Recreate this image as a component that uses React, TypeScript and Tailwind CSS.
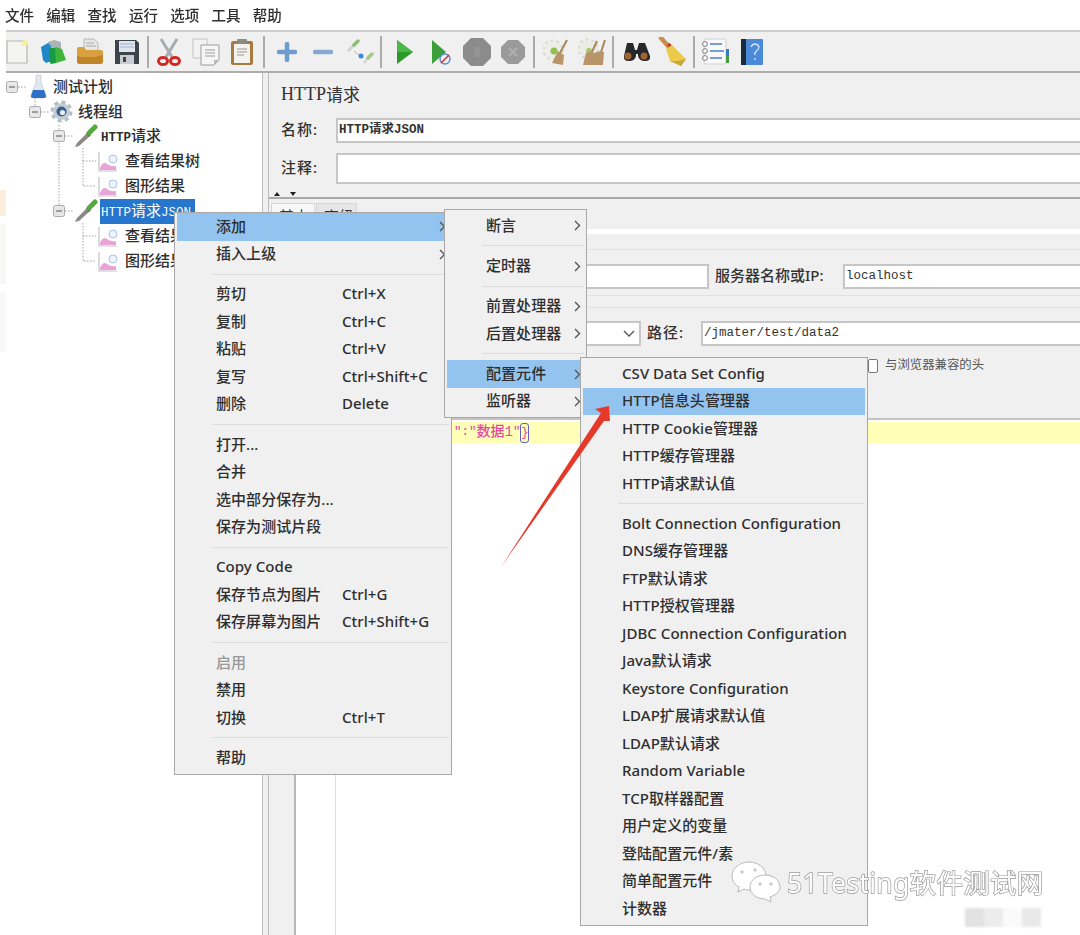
import React from "react";

type MenuRow = {
  label?: string;
  shortcut?: string;
  sub?: boolean;
  active?: boolean;
  muted?: boolean;
};

const mainMenu: MenuRow[] = [
  { label: "添加", sub: true, active: true },
  { label: "插入上级", sub: true },
  {},
  { label: "剪切", shortcut: "Ctrl+X" },
  { label: "复制", shortcut: "Ctrl+C" },
  { label: "粘贴", shortcut: "Ctrl+V" },
  { label: "复写", shortcut: "Ctrl+Shift+C" },
  { label: "删除", shortcut: "Delete" },
  {},
  { label: "打开..." },
  { label: "合并" },
  { label: "选中部分保存为..." },
  { label: "保存为测试片段" },
  {},
  { label: "Copy Code" },
  { label: "保存节点为图片", shortcut: "Ctrl+G" },
  { label: "保存屏幕为图片", shortcut: "Ctrl+Shift+G" },
  {},
  { label: "启用", muted: true },
  { label: "禁用" },
  { label: "切换", shortcut: "Ctrl+T" },
  {},
  { label: "帮助" },
];

const addMenu: MenuRow[] = [
  { label: "断言", sub: true },
  {},
  { label: "定时器", sub: true },
  {},
  { label: "前置处理器", sub: true },
  { label: "后置处理器", sub: true },
  {},
  { label: "配置元件", sub: true, active: true },
  { label: "监听器", sub: true },
];

const configMenu: MenuRow[] = [
  { label: "CSV Data Set Config" },
  { label: "HTTP信息头管理器", active: true },
  { label: "HTTP Cookie管理器" },
  { label: "HTTP缓存管理器" },
  { label: "HTTP请求默认值" },
  {},
  { label: "Bolt Connection Configuration" },
  { label: "DNS缓存管理器" },
  { label: "FTP默认请求" },
  { label: "HTTP授权管理器" },
  { label: "JDBC Connection Configuration" },
  { label: "Java默认请求" },
  { label: "Keystore Configuration" },
  { label: "LDAP扩展请求默认值" },
  { label: "LDAP默认请求" },
  { label: "Random Variable" },
  { label: "TCP取样器配置" },
  { label: "用户定义的变量" },
  { label: "登陆配置元件/素" },
  { label: "简单配置元件" },
  { label: "计数器" },
];

function Chevron() {
  return (
    <svg width="7" height="11" viewBox="0 0 7 11" className="shrink-0 mt-[2px]">
      <path d="M1 1l4.5 4.5L1 10" fill="none" stroke="#555" strokeWidth="1.4" />
    </svg>
  );
}

function Menu({ rows, className }: { rows: MenuRow[]; className: string }) {
  return (
    <div className={`absolute bg-[#f0f0f0] border border-[#a8a8a8] p-[2px] ${className}`}>
      {rows.map((row, i) =>
        row.label ? (
          <div
            key={i}
            className={`h-[27.5px] flex items-center pl-[39px] pr-[3px] pb-[2px] text-[15px] font-medium tracking-[0.05px] ${
              row.active ? "bg-[#93c4f0]" : ""
            } ${row.muted ? "text-[#999]" : "text-[#2e2e2e]"}`}
          >
            <span className="whitespace-nowrap">{row.label}</span>
            {row.shortcut && (
              <span className="absolute left-[167px] whitespace-nowrap">{row.shortcut}</span>
            )}
            {row.sub && (
              <span className="ml-auto">
                <Chevron />
              </span>
            )}
          </div>
        ) : (
          <div key={i} className="h-[12.75px] flex items-center pl-[35px]">
            <div className="h-[1px] w-full bg-[#dcdcdc]" />
          </div>
        )
      )}
    </div>
  );
}

/* toolbar drawings */
const NewDoc = () => (
  <svg width="24" height="26" viewBox="0 0 24 26">
    <path d="M2 2h17l3 3v19H2z" fill="#f4f4f2" stroke="#b4b4b0" strokeWidth="1.2" />
    <circle cx="20" cy="4" r="3" fill="#f6ee9c" />
  </svg>
);
const Templates = () => (
  <svg width="28" height="26" viewBox="0 0 28 26">
    <path d="M8 3l6-2 7 2v10l-13 2z" fill="#a9b4b6" />
    <path d="M1 8l7-4 3 3v15l-5 2-3-3z" fill="#1f88c8" />
    <path d="M9 9l7 0v15l-5 1-2-3z" fill="#169c46" />
    <path d="M15 8l7 2 4 11-10 3z" fill="#3fb53a" />
  </svg>
);
const OpenFolder = () => (
  <svg width="28" height="27" viewBox="0 0 28 27">
    <path d="M8 1h10l4 4v9H8z" fill="#e6e6e6" stroke="#aaa" strokeWidth=".8" />
    <path d="M10 5h8M10 8h10" stroke="#aaa" />
    <path d="M1 11q0-2 2-2h5l2 3h15q2 0 2 2v9q0 3-3 3H4q-3 0-3-3z" fill="#d9a040" />
    <path d="M1 18q12 3 26-1v6q0 3-3 3H4q-3 0-3-3z" fill="#c08428" />
  </svg>
);
const Floppy = () => (
  <svg width="26" height="26" viewBox="0 0 26 26">
    <path d="M1 1h21l3 3v21H1z" fill="#3e444c" />
    <rect x="5" y="2" width="16" height="11" fill="#dfe6ee" />
    <path d="M6 5h14M6 8h14" stroke="#9fb4cc" />
    <rect x="6" y="16" width="14" height="9" fill="#c8ccd0" />
    <rect x="9" y="18" width="3" height="5" fill="#444" />
  </svg>
);
const Scissors = () => (
  <svg width="24" height="28" viewBox="0 0 24 28">
    <path d="M4 1l11 18M20 1L9 19" stroke="#a8acb0" strokeWidth="3" fill="none" />
    <ellipse cx="6" cy="23" rx="4.5" ry="3.5" fill="none" stroke="#cf2a24" strokeWidth="3" />
    <ellipse cx="18" cy="23" rx="4.5" ry="3.5" fill="none" stroke="#cf2a24" strokeWidth="3" />
  </svg>
);
const CopyDocs = () => (
  <svg width="28" height="28" viewBox="0 0 28 28">
    <path d="M1 1h14v19H1z" fill="#f2f2f2" stroke="#c4c4c4" />
    <path d="M9 7h18v15l-5 5H9z" fill="#f6f6f6" stroke="#9c9c9c" />
    <path d="M13 12h10M13 15h10M13 18h10" stroke="#999" />
    <path d="M27 22h-5v5z" fill="#bbb" />
  </svg>
);
const Paste = () => (
  <svg width="24" height="28" viewBox="0 0 24 28">
    <rect x="1" y="3" width="22" height="24" rx="2" fill="#a87a40" />
    <rect x="4" y="6" width="16" height="19" fill="#f4f2ec" />
    <rect x="7" y="1" width="10" height="5" rx="1" fill="#8a8a80" />
    <path d="M7 11h10M7 14h10M7 17h7" stroke="#999" />
  </svg>
);
const Plus = () => (
  <svg width="20" height="20" viewBox="0 0 20 20">
    <path d="M10 2v16M2 10h16" stroke="#6f9ccf" strokeWidth="4.5" strokeLinecap="round" />
  </svg>
);
const Minus = () => (
  <svg width="20" height="8" viewBox="0 0 20 8">
    <path d="M2 4h16" stroke="#86a9d3" strokeWidth="4.5" strokeLinecap="round" />
  </svg>
);
const Toggle = () => (
  <svg width="28" height="26" viewBox="0 0 28 26">
    <path d="M2 12l6-6" stroke="#d4d4d4" strokeWidth="3" />
    <path d="M8 6l4-4" stroke="#8cc070" strokeWidth="3.5" strokeLinecap="round" />
    <path d="M18 24l4-5" stroke="#d8d8d8" strokeWidth="3" />
    <path d="M22 19l4-4" stroke="#a0cc80" strokeWidth="3.5" strokeLinecap="round" />
    <path d="M8 12l6 5" stroke="#bbb" />
    <circle cx="15" cy="17" r="2.5" fill="#3c88e0" />
  </svg>
);
const Play = () => (
  <svg width="18" height="26" viewBox="0 0 18 26">
    <path d="M1 1l16 12L1 25z" fill="#2c9a2a" />
    <path d="M1 1l16 12H1z" fill="#4cb848" />
  </svg>
);
const PlayNoPause = () => (
  <svg width="20" height="26" viewBox="0 0 20 26">
    <path d="M1 1l14 12L1 25z" fill="#3ca03a" />
    <circle cx="14" cy="20" r="5" fill="#eef4fc" stroke="#5a8ad0" strokeWidth="1.4" />
    <path d="M10 24l8-8" stroke="#d83030" strokeWidth="1.6" />
  </svg>
);
const Stop = () => (
  <svg width="28" height="28" viewBox="0 0 28 28">
    <path d="M8 0h12l8 8v12l-8 8H8l-8-8V8z" fill="#8c8c8c" />
    <path d="M11 9h6v10h-6z" fill="#949494" />
  </svg>
);
const Shutdown = () => (
  <svg width="24" height="24" viewBox="0 0 24 24">
    <path d="M7 0h10l7 7v10l-7 7H7l-7-7V7z" fill="#9a9a9a" />
    <path d="M8 8l8 8M16 8l-8 8" stroke="#b0b0b0" strokeWidth="2" />
  </svg>
);
const ClearOne = () => (
  <svg width="26" height="28" viewBox="0 0 26 28">
    <circle cx="10" cy="12" r="8" fill="#eceee8" />
    <circle cx="10" cy="12" r="9.5" fill="none" stroke="#dcdcd4" strokeWidth="2.5" strokeDasharray="3 3" />
    <circle cx="11" cy="13" r="3.5" fill="#90c050" />
    <path d="M24 2l-7 13" stroke="#a88858" strokeWidth="2" />
    <path d="M15 13l6 4 -1 10 -11-2z" fill="#b89468" />
  </svg>
);
const ClearAll = () => (
  <svg width="28" height="28" viewBox="0 0 28 28">
    <circle cx="10" cy="11" r="8" fill="#ecece6" />
    <circle cx="10" cy="11" r="9.5" fill="none" stroke="#dcdcd4" strokeWidth="2.5" strokeDasharray="3 3" />
    <circle cx="11" cy="13" r="3" fill="#a8c868" />
    <path d="M19 3l-5 11M27 2l-4 12" stroke="#a88858" strokeWidth="2" />
    <path d="M8 15l6-2 2 2 6-2 4 1-1 13H5z" fill="#b89468" />
  </svg>
);
const Binoculars = () => (
  <svg width="30" height="20" viewBox="0 0 30 20">
    <path d="M6 1h6l2 7h2l2-7h6l5 13q1 5-5 5t-7-5v-2h-2v2q-1 5-7 5t-5-5z" fill="#26282c" />
    <circle cx="7" cy="14" r="3.5" fill="#a0642c" />
    <circle cx="23" cy="14" r="3.5" fill="#a0642c" />
  </svg>
);
const Broom = () => (
  <svg width="30" height="30" viewBox="0 0 30 30">
    <path d="M3 1l8 9" stroke="#c8904c" strokeWidth="4.5" strokeLinecap="round" />
    <path d="M10 7l5 5" stroke="#cc3a26" strokeWidth="3.5" />
    <path d="M8 12l6-4 14 14-5 7-11-5z" fill="#ecca4c" />
    <path d="M12 24l11 5 5-7-8 2z" fill="#c8a838" />
  </svg>
);
const ListIcon = () => (
  <svg width="28" height="28" viewBox="0 0 28 28">
    <rect x="3" y="1" width="22" height="25" rx="2" fill="#f8f8f8" stroke="#d0d0d0" />
    <path d="M9 6h12M9 13h14M9 20h12" stroke="#4a80c8" strokeWidth="1.6" />
    <circle cx="4" cy="6" r="2.4" fill="#fff" stroke="#777" />
    <circle cx="4" cy="13" r="2.4" fill="#fff" stroke="#777" />
    <circle cx="4" cy="20" r="2.4" fill="#fff" stroke="#777" />
    <rect x="25" y="11" width="3" height="7" fill="#3c78c0" />
    <rect x="25" y="18" width="3" height="7" fill="#4a9a40" />
  </svg>
);
const HelpBook = () => (
  <svg width="22" height="26" viewBox="0 0 22 26">
    <rect x="0" y="0" width="22" height="26" rx="1" fill="#4a8ad8" />
    <rect x="0" y="0" width="5" height="26" fill="#1c2c40" />
    <path d="M10 8q1-3 4-3t4 3q0 2-2.5 4t-1.5 4M14 19v2" fill="none" stroke="#cfe2f8" strokeWidth="1.3" />
  </svg>
);

const Sep = ({ className = "mr-[2px]" }: { className?: string }) => (
  <div className={`w-[2px] h-[32px] ml-[2px] bg-[#ababab] ${className}`} />
);

function Tool({ children, className = "w-[36.5px]" }: { children: React.ReactNode; className?: string }) {
  return <div className={`flex justify-center items-center ${className}`}>{children}</div>;
}

/* tree drawings */
const Flask = () => (
  <svg width="17" height="25" viewBox="0 0 17 25">
    <path d="M6 1h5v8l5 12q1 3-2 3H3q-3 0-2-3l5-12z" fill="#e4e8ec" stroke="#b8c0c8" strokeWidth=".6" />
    <path d="M3 16h11l2 6q0 2-2 2H3q-2 0-2-2z" fill="#2c70c8" />
  </svg>
);
const Gear = () => (
  <svg width="23" height="23" viewBox="0 0 23 23">
    <circle cx="11.5" cy="11.5" r="8.5" fill="#c4ccd6" />
    <circle cx="11.5" cy="11.5" r="9.5" fill="none" stroke="#b4bcc6" strokeWidth="3" strokeDasharray="4 3.4" />
    <circle cx="11.5" cy="11.5" r="5" fill="#3a6090" />
    <circle cx="12.5" cy="12.5" r="2.6" fill="#e8ecf0" />
  </svg>
);
const Dropper = () => (
  <svg width="25" height="25" viewBox="0 0 25 25">
    <path d="M2 23l2-4L14 9l3 3L6 22z" fill="#8a8a82" />
    <path d="M14 9l3 3" stroke="#555" strokeWidth="2" />
    <path d="M16 9l6-6" stroke="#58a840" strokeWidth="5" strokeLinecap="round" />
  </svg>
);
const Chart = () => (
  <svg width="20" height="21" viewBox="0 0 20 21">
    <path d="M1 1v19h18" fill="none" stroke="#c4c4c4" strokeWidth="1.2" />
    <path d="M2 19v-2q3-7 7-4t9 2v4z" fill="#e8a4d8" />
    <circle cx="15" cy="8" r="4" fill="#eef4fb" stroke="#a8c4ec" />
  </svg>
);

function TreeLines() {
  const boxes = [
    [12, 87],
    [35, 112],
    [59, 136],
    [59, 211],
  ];
  return (
    <svg className="absolute left-0 top-0" width="256" height="200" viewBox="6 73 256 200">
      <g fill="none" stroke="#a0a0a0" strokeDasharray="1.5 1.5">
        <path d="M18 87h9M41 112h8M65 136h8M65 211h8" />
        <path d="M35 98v8M59 125v80" />
        <path d="M83 148v38h13M83 161h13M83 223v38h13M83 236h13" />
      </g>
      {boxes.map(([x, y]) => (
        <g key={`${x}-${y}`}>
          <rect x={x - 5.5} y={y - 5.5} width="11" height="11" rx="2" fill="#e8e8e8" stroke="#aaa" />
          <path d={`M${x - 3} ${y}h6`} stroke="#555" />
        </g>
      ))}
    </svg>
  );
}

function Field({ children, className }: { children?: React.ReactNode; className: string }) {
  return (
    <div
      className={`h-[25px] bg-white border-2 border-r-0 border-[#c6c6c6] flex items-center pl-[1px] text-[#333] font-['Liberation_Mono','Noto_Sans_CJK_SC',monospace] text-[12.5px] whitespace-nowrap ${className}`}
    >
      {children}
    </div>
  );
}

function TopPanel() {
  return (
    <div className="flex-1 flex flex-col bg-[#f0f0f0] border-l border-[#bcbcbc] text-[#333] min-w-0">
      <div className="h-[45px] flex items-center pl-[12px] pb-[2px] text-[17px]">
        <span className="font-['Liberation_Serif',serif] text-[18px]">HTTP</span>请求
      </div>
      <div className="flex items-center">
        <span className="w-[67px] pl-[12px] pb-[2px] text-[15px] font-medium tracking-[1px]">名称:</span>
        <Field className="flex-1 font-bold">HTTP请求JSON</Field>
      </div>
      <div className="flex items-center mt-[10px]">
        <span className="w-[67px] pl-[12px] pb-[2px] text-[15px] font-medium tracking-[1px]">注释:</span>
        <Field className="flex-1 !h-[31px]" />
      </div>
      <div className="mt-[8px] h-[5px] flex gap-[10px] pl-[5px] items-start">
        <svg width="6" height="4" viewBox="0 0 6 4">
          <path d="M3 0l3 4H0z" fill="#222" />
        </svg>
        <svg width="6" height="4" viewBox="0 0 6 4">
          <path d="M3 4L0 0h6z" fill="#222" />
        </svg>
      </div>
      <div className="h-[2px] bg-[#a9a9a9]" />
      <div className="mt-[4px] h-[26px] flex pl-[2px] text-[15px]">
        <div className="w-[44px] bg-[#f8f8f8] pt-[1px] pl-[7px] border border-b-0 border-[#d8d8d8]">基本</div>
        <div className="w-[41px] ml-[1px] bg-[#e6e6e6] pt-[1px] pl-[7px] border border-b-0 border-[#d8d8d8]">高级</div>
      </div>
      <div className="h-[5px] bg-white" />
      <div className="mt-[15px] h-[1px] bg-[#e2e2e2]" />
      <div className="mt-[14px] flex items-center pl-[231px]">
        <Field className="w-[209px] border-r-2" />
        <span className="ml-[6px] w-[128px] pb-[2px] text-[15px] font-medium whitespace-nowrap">服务器名称或IP:</span>
        <Field className="flex-1">localhost</Field>
      </div>
      <div className="mt-[6px] h-[1px] bg-[#e2e2e2]" />
      <div className="mt-[11px] h-[1px] bg-[#e2e2e2]" />
      <div className="mt-[13px] flex items-center pl-[231px]">
        <Field className="w-[141px] border-r-2 justify-end pr-[4px]">
          <svg width="12" height="8" viewBox="0 0 12 8">
            <path d="M1 1l5 5 5-5" fill="none" stroke="#555" strokeWidth="1.4" />
          </svg>
        </Field>
        <span className="ml-[6px] w-[54px] pb-[2px] text-[15px] font-medium tracking-[1px] whitespace-nowrap">路径:</span>
        <Field className="flex-1">/jmater/test/data2</Field>
      </div>
      <div className="mt-[12px] flex items-center pl-[599px] h-[15px]">
        <div className="w-[10px] h-[14px] bg-white border border-[#777] rounded-[2px]" />
        <span className="ml-[7px] text-[12.4px] text-[#555] whitespace-nowrap">与浏览器兼容的头</span>
      </div>
      <div className="mt-[45px] h-[2px] bg-[#c4c4c4]" />
      <div className="flex-1 flex">
        <div className="w-[27px] border-r-2 border-[#b8b8b8]" />
        <div className="w-[40px] bg-white border-r border-[#e0e0e0]" />
        <div className="flex-1 bg-white pt-[2px]">
          <div className="h-[21px] bg-[#ffffb8] flex items-center pl-[118px] font-['Liberation_Mono','Noto_Sans_CJK_SC',monospace] text-[#e04aa0] text-[14px] font-medium">
            <span className="text-[12.5px] whitespace-nowrap">":"</span>
            数据1
            <span className="text-[12.5px]">"</span>
            <span className="h-[20px] w-[9px] border border-[#6060c8] rounded-[3px] flex items-center justify-center text-[12px]">
              {"}"}
            </span>
          </div>
        </div>
      </div>
    </div>
  );
}

const mono = "font-['Liberation_Mono',monospace] text-[12.5px]";

export default function App() {
  const tree = [
    { pl: "pl-[24px]", w: "w-[23px]", icon: <Flask />, label: <span>测试计划</span> },
    { pl: "pl-[44px]", w: "w-[28px]", icon: <Gear />, label: <span>线程组</span> },
    {
      pl: "pl-[67px]",
      w: "w-[28px]",
      icon: <Dropper />,
      label: (
        <span>
          <span className={`${mono} font-bold`}>HTTP</span>请求
        </span>
      ),
    },
    { pl: "pl-[92px]", w: "w-[27px]", icon: <Chart />, label: <span>查看结果树</span> },
    { pl: "pl-[92px]", w: "w-[27px]", icon: <Chart />, label: <span>图形结果</span> },
    {
      pl: "pl-[67px]",
      w: "w-[28px]",
      icon: <Dropper />,
      label: (
        <span>
          <span className={mono}>HTTP</span>请求<span className={mono}>JSON</span>
        </span>
      ),
      selected: true,
    },
    { pl: "pl-[92px]", w: "w-[27px]", icon: <Chart />, label: <span>查看结果树</span> },
    { pl: "pl-[92px]", w: "w-[27px]", icon: <Chart />, label: <span>图形结果</span> },
  ];

  return (
    <div className="relative w-[1080px] h-[935px] overflow-hidden bg-white font-['Noto_Sans','Noto_Sans_CJK_SC',sans-serif]">
      {/* the capture itself is soft; the watermark on top of it is not */}
      <div className="relative h-full blur-[0.6px]">
        <div className="h-[30px] flex items-center gap-[11.3px] pl-[5px] pt-[2px] text-[14.5px] text-[#2e2e2e] font-medium">
          {["文件", "编辑", "查找", "运行", "选项", "工具", "帮助"].map((m) => (
            <span key={m} className="w-[30px]">
              {m}
            </span>
          ))}
        </div>

        <div className="flex h-[905px]">
          <div className="w-[6px] pt-[160px] flex flex-col shrink-0">
            <div className="h-[26px] bg-[#fbeeda]" />
            <div className="mt-[8px] h-[60px] bg-[#f7f7f5]" />
            <div className="mt-[8px] h-[60px] bg-[#f9f9f9]" />
          </div>
          <div className="flex-1 flex flex-col min-w-0">
            <div className="h-[43px] flex items-center bg-[#f0f0f0] border-t-2 border-b-2 border-t-[#cfcfcf] border-b-[#adadad]">
              <Tool className="w-[36.5px] -ml-[7px]"><NewDoc /></Tool>
              <Tool><Templates /></Tool>
              <Tool><OpenFolder /></Tool>
              <Tool><Floppy /></Tool>
              <Sep />
              <Tool><Scissors /></Tool>
              <Tool><CopyDocs /></Tool>
              <Tool><Paste /></Tool>
              <Sep className="mr-[4px]" />
              <Tool><Plus /></Tool>
              <Tool><Minus /></Tool>
              <Tool><Toggle /></Tool>
              <Sep className="mr-[5px]" />
              <Tool className="w-[36px]"><Play /></Tool>
              <Tool className="w-[36px]"><PlayNoPause /></Tool>
              <Tool className="w-[36px]"><Stop /></Tool>
              <Tool className="w-[36px]"><Shutdown /></Tool>
              <Sep className="mr-[3px]" />
              <Tool className="w-[36px]"><ClearOne /></Tool>
              <Tool className="w-[36px]"><ClearAll /></Tool>
              <Sep className="mr-[4px]" />
              <Tool><Binoculars /></Tool>
              <Tool><Broom /></Tool>
              <Sep />
              <Tool><ListIcon /></Tool>
              <Tool><HelpBook /></Tool>
            </div>

            <div className="flex-1 flex min-h-0">
              <div className="relative w-[256px] bg-white pt-[1.5px] text-[15px] text-[#2e2e2e] font-medium">
                <TreeLines />
                {tree.map((row, i) => (
                  <div key={i} className={`relative h-[24.9px] flex items-center ${row.pl}`}>
                    <div className={`${row.w} shrink-0 flex items-center`}>{row.icon}</div>
                    <div
                      className={`whitespace-nowrap pb-[2px] ${
                        row.selected ? "w-[95px] h-[25px] -ml-[1px] pl-[1px] flex items-center overflow-hidden bg-[#2576cc] text-white font-normal" : ""
                      }`}
                    >
                      {row.label}
                    </div>
                  </div>
                ))}
              </div>
              <div className="w-[6px] bg-[#f0f0f0] border-l border-[#bdbdbd]" />
              <TopPanel />
            </div>
          </div>
        </div>

        <Menu rows={mainMenu} className="left-[174px] top-[212px] w-[278px] pt-[0px] pb-[2px]" />
        <Menu rows={addMenu} className="left-[444px] top-[209px] w-[143px]" />
        <Menu rows={configMenu} className="left-[580px] top-[357px] w-[288px]" />
      </div>

      <svg className="absolute left-0 top-0" width="1080" height="935" viewBox="0 0 1080 935">
        <polygon points="609,406 595,409 601,413 501,567 604,421 610,421" fill="#e5392a" />
        <g fill="#fff" stroke="#a8a8a8" strokeWidth="0.8">
          <path d="M749 862c-9 0-17 6-17 14 0 5 3 9 7 11l-1 5 6-3c2 1 4 1 6 1 8 0 16-6 16-14s-8-14-17-14z" />
          <path d="M765 875c-8 0-15 5-15 12s7 12 15 12l6 3-1-5c6-2 10-6 10-10 0-7-7-12-15-12z" />
          <circle cx="742" cy="872" r="1.2" />
          <circle cx="755" cy="870" r="1.2" />
          <circle cx="760" cy="884" r="1.2" />
          <circle cx="771" cy="884" r="1.2" />
        </g>
      </svg>
      <div className="absolute left-[787px] top-[864px] text-[26.5px] leading-[38px] whitespace-nowrap text-white tracking-[0.3px] [-webkit-text-stroke:1.4px_#9a9a9a] [paint-order:stroke_fill]">
        51Testing软件测试网
      </div>
      <div className="absolute left-[965px] top-[908px] flex h-[19px] blur-[1px]">
        <div className="w-[19px] bg-[#e2e2e2]" />
        <div className="w-[19px] bg-[#ececec]" />
        <div className="w-[19px] bg-[#fafafa]" />
        <div className="w-[19px] bg-[#e9e9e9]" />
      </div>
    </div>
  );
}
